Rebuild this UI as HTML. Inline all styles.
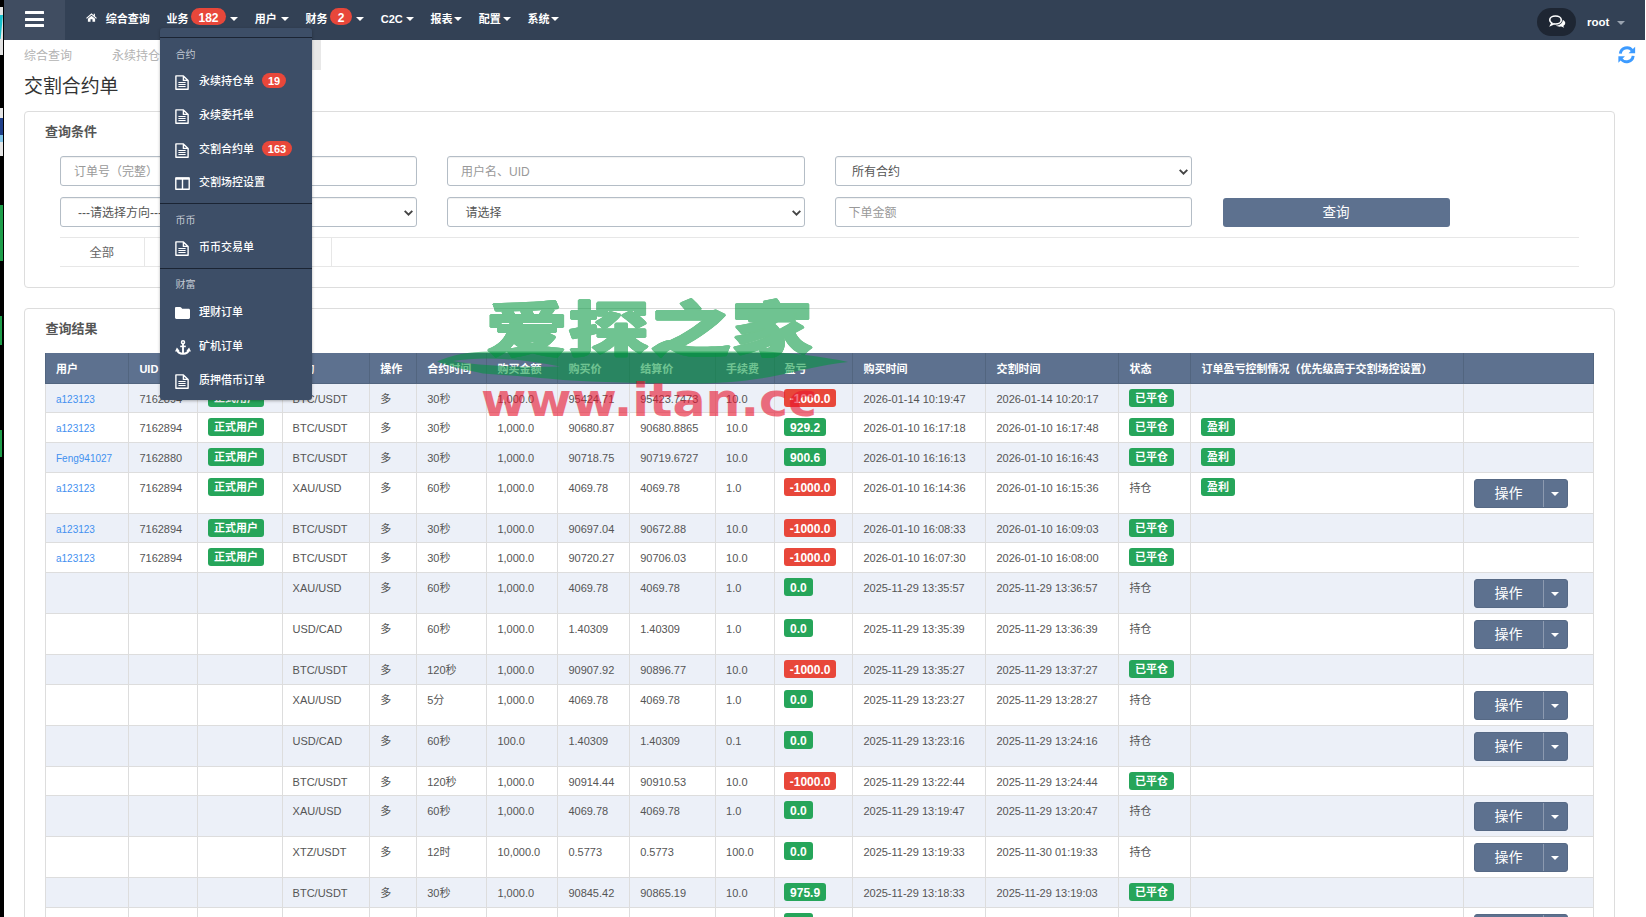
<!DOCTYPE html>
<html lang="zh-CN"><head><meta charset="utf-8"><title>交割合约单</title>
<style>
*{box-sizing:border-box;margin:0;padding:0}
html,body{width:1646px;height:917px;overflow:hidden;background:#fff}
body{position:relative;font-family:"Liberation Sans", "Noto Sans CJK SC", sans-serif;font-size:11px;color:#555;-webkit-font-smoothing:antialiased}
.a{position:absolute;white-space:nowrap}
svg{position:absolute;overflow:visible}
#strip{left:0;top:0;width:4px;height:917px;background:#000}
#nav{left:4px;top:0;width:1641px;height:40px;background:#334155}
#burger{left:0;top:0;width:61px;height:40px;background:#404d61}
.bar{left:21px;width:19px;height:3px;background:#fff;border-radius:.5px}
.ni{color:#fff;font-weight:700;font-size:11px;line-height:16px;top:10.5px}
.caret{width:0;height:0;border-left:4px solid transparent;border-right:4px solid transparent;border-top:4px solid #fff;top:17px}
.nb{background:#e8473a;color:#fff;font-weight:700;font-size:12px;line-height:17px;height:17px;top:8px;border-radius:9px;text-align:center;padding-top:2.3px;overflow:hidden}
.tab{top:48.2px;font-size:12px;line-height:16px;color:#b3b3b3}
#title{left:24px;top:73px;font-size:18.9px;line-height:28px;color:#333}
.panel{border:1px solid #ddd;border-radius:4px;background:#fff}
.ph{font-size:13px;font-weight:700;color:#555;line-height:18px}
.inp{height:30px;border:1px solid #b4bdc6;border-radius:3px;background:#fff;font-size:12px;line-height:28px;padding-top:1px;overflow:hidden;color:#999;box-shadow:inset 0 1px 1px rgba(0,0,0,.06)}
.inp.sel{color:#555}
.hl{height:1px;background:#e7e7e7}
.vl{width:1px;background:#e7e7e7}
.btn{background:#5d718f;color:#fff;border-radius:3px;text-align:center}
#thead{background:#5d718f;color:#fff;font-weight:700}
.row{left:45px;width:1549px;border-bottom:1px solid #ddd;border-right:1px solid #ddd}
.row.o{background:#ecf0f8}
.c{position:absolute;top:0;bottom:0;border-left:1px solid #ddd;white-space:nowrap}
.c span.t{position:relative;display:block;margin-left:10px;top:7px;line-height:16px}
#thead .c{border-left:1px solid #52657f}
#thead .c span.t{top:7.5px}
.c span.lk{color:#4390f0;font-size:10px;top:8px}
.bd{position:absolute;left:9.5px;top:5px;height:17.5px;line-height:17.5px;padding-top:1.2px;overflow:hidden;border-radius:3px;color:#fff;font-weight:700;font-size:11px;text-align:center}
.g{background:#26a55a}
.r{background:#e8473a}
.ob{position:absolute;left:10px;top:5.5px;width:94px;height:29px;border-radius:3px;background:#5d718f;border:1px solid #566985}
.ob .m{position:absolute;left:0;top:0;width:66px;height:27px;line-height:27px;color:#fff;font-size:14px;text-align:center}
.ob .s{position:absolute;left:67.5px;top:0;width:1px;height:27px;background:#8c9ab0}
.ob .k{position:absolute;left:76px;top:12px;width:0;height:0;border-left:4px solid transparent;border-right:4px solid transparent;border-top:4px solid #fff}
#dd{left:160px;top:28px;width:152px;height:372px;background:#3d4e67;border-radius:3px;box-shadow:0 1px 3px rgba(0,0,0,.3)}
.dv{left:0;width:152px;height:1px;background:#1b2433}
.dh{left:15.5px;font-size:10px;line-height:14px;color:#c3cad4}
.di{left:39px;font-size:11px;line-height:16px;color:#fff;font-weight:500}
.db{background:#e8473a;color:#fff;font-size:11px;font-weight:700;height:15px;line-height:15px;padding-top:1.4px;overflow:hidden;border-radius:8px;text-align:center}
</style></head>
<body>
<div id="strip" class="a">
<div class="a" style="left:0px;top:7px;width:3.1px;height:47.6px;background:#e3e3e3"></div>
<div class="a" style="left:0px;top:108px;width:3.1px;height:47.6px;background:#e6e6e6"></div>
<div class="a" style="left:0px;top:118px;width:3px;height:17px;background:#1f3f8a"></div>
<div class="a" style="left:0px;top:135px;width:3px;height:7px;background:#7fc4e8"></div>
<div class="a" style="left:0px;top:205px;width:3px;height:56px;background:#1e9e4a"></div>
<div class="a" style="left:0px;top:316px;width:1.5px;height:29px;background:#1e9e4a"></div>
<div class="a" style="left:0px;top:430px;width:1.5px;height:27px;background:#1e9e4a"></div>
<div class="a" style="left:0;top:15px;width:3px;height:24px;background:#16bfcc;clip-path:polygon(0 0,100% 0,20% 100%,0 100%)"></div>
</div>
<div id="nav" class="a">
<div id="burger" class="a"><div class="a bar" style="top:11px"></div><div class="a bar" style="top:17.5px"></div><div class="a bar" style="top:24px"></div></div>
<svg style="left:81.8px;top:13.3px" width="11" height="8.8" viewBox="0 0 22 18"><path fill="#fff" d="M11 0.5 L0 10 L1.6 11.8 L11 3.8 L20.4 11.8 L22 10 L18 6.5 V1.5 H15.5 V4.4 Z"/><path fill="#fff" d="M11 5.6 L3.6 11.9 V18 H9 V12.8 H13 V18 H18.4 V11.9 Z"/></svg>
<div class="a ni" style="left:101.7px">综合查询</div>
<div class="a ni" style="left:162.4px">业务</div>
<div class="a nb" style="left:187px;width:35px">182</div>
<div class="a caret" style="left:226px"></div>
<div class="a ni" style="left:250.8px">用户</div>
<div class="a caret" style="left:277.2px"></div>
<div class="a ni" style="left:301.5px">财务</div>
<div class="a nb" style="left:326px;width:22px">2</div>
<div class="a caret" style="left:352.2px"></div>
<div class="a ni" style="left:376.8px">C2C</div>
<div class="a caret" style="left:401.8px"></div>
<div class="a ni" style="left:426.4px">报表</div>
<div class="a caret" style="left:450px"></div>
<div class="a ni" style="left:474.7px">配置</div>
<div class="a caret" style="left:498.6px"></div>
<div class="a ni" style="left:523.5px">系统</div>
<div class="a caret" style="left:547.2px"></div>
<div class="a" style="left:1533px;top:8px;width:39px;height:28px;border-radius:14px;background:#1e2633"></div>
<svg style="left:1544.5px;top:15px" width="17" height="13" viewBox="0 0 34 26"><path fill="none" stroke="#fff" stroke-width="3.2" d="M13 2 C6.5 2 1.5 5.6 1.5 10 C1.5 12.6 3.2 14.8 5.8 16.2 L3.8 20.2 L9.8 17.6 C10.8 17.8 11.9 18 13 18 C19.5 18 24.5 14.4 24.5 10 C24.5 5.6 19.5 2 13 2 Z"/><path fill="#fff" d="M27.5 9.5 C30.5 11 32.5 13.3 32.5 16 C32.5 18.4 31 20.5 28.6 21.9 L30.4 25.6 L24.6 23.2 C23.6 23.4 22.6 23.5 21.5 23.5 C18.4 23.5 15.6 22.6 13.6 21.2 C20.4 20.8 27.6 17.2 27.5 9.5 Z"/></svg>
<div class="a ni" style="left:1583px;font-size:11.5px;top:13px;line-height:18px">root</div>
<div class="a caret" style="left:1613px;top:21px;border-top-color:#9aa3b0"></div>
</div>
<div class="a" style="left:192px;top:40px;width:128.5px;height:30px;background:#e8e8e8"></div>
<div class="a tab" style="left:24px">综合查询</div>
<div class="a tab" style="left:112px">永续持仓单</div>
<div class="a tab" style="left:212px;color:#666">交割合约单</div>
<svg style="left:1618px;top:46px" width="17.5" height="17.5" viewBox="0 0 24 24"><g fill="none" stroke="#3d9bff" stroke-width="4"><path d="M3.2 10.5 A9 9 0 0 1 19.5 6.2"/><path d="M20.8 13.5 A9 9 0 0 1 4.5 17.8"/></g><path fill="#3d9bff" d="M23.5 1 V10 H14.5 Z"/><path fill="#3d9bff" d="M0.5 23 V14 H9.5 Z"/></svg>
<div id="title" class="a">交割合约单</div>
<div class="a panel" style="left:24px;top:111px;width:1591px;height:177px"></div>
<div class="a ph" style="left:45px;top:123px">查询条件</div>
<div class="a inp" style="left:60px;top:156px;width:357px;padding-left:13px">订单号（完整）</div>
<div class="a inp" style="left:447px;top:156px;width:358px;padding-left:13px">用户名、UID</div>
<div class="a inp sel" style="left:835px;top:156px;width:357px;padding-left:16px">所有合约</div>
<svg style="left:1178.5px;top:168.5px" width="9" height="6" viewBox="0 0 9 6"><path fill="none" stroke="#444" stroke-width="1.9" d="M0.7 0.8 L4.5 4.6 L8.3 0.8"/></svg>
<div class="a inp sel" style="left:60px;top:197px;width:357px;padding-left:17px">---请选择方向---</div>
<svg style="left:403.5px;top:209.5px" width="9" height="6" viewBox="0 0 9 6"><path fill="none" stroke="#444" stroke-width="1.9" d="M0.7 0.8 L4.5 4.6 L8.3 0.8"/></svg>
<div class="a inp sel" style="left:447px;top:197px;width:358px;padding-left:17.5px">请选择</div>
<svg style="left:791.5px;top:209.5px" width="9" height="6" viewBox="0 0 9 6"><path fill="none" stroke="#444" stroke-width="1.9" d="M0.7 0.8 L4.5 4.6 L8.3 0.8"/></svg>
<div class="a inp" style="left:835px;top:197px;width:357px;padding-left:12.5px">下单金额</div>
<div class="a btn" style="left:1222.5px;top:197.5px;width:227px;height:29px;line-height:30.5px;font-size:13.5px;overflow:hidden">查询</div>
<div class="a hl" style="left:60px;top:237px;width:1519px"></div>
<div class="a hl" style="left:60px;top:266px;width:1519px"></div>
<div class="a vl" style="left:144px;top:238px;height:28px"></div>
<div class="a vl" style="left:331px;top:238px;height:28px"></div>
<div class="a" style="left:89.5px;top:245px;font-size:12.3px;line-height:17px;color:#666">全部</div>
<div class="a panel" style="left:24px;top:308px;width:1591px;height:640px"></div>
<div class="a ph" style="left:45.5px;top:320px">查询结果</div>
<div id="thead" class="a row" style="top:353px;height:31px;border-bottom:1px solid #52657f;border-right:1px solid #52657f">
<div class="c" style="left:0.0px;width:83.4px"><span class="t">用户</span></div>
<div class="c" style="left:83.4px;width:69.0px"><span class="t">UID</span></div>
<div class="c" style="left:152.4px;width:84.2px"><span class="t">用户类型</span></div>
<div class="c" style="left:236.6px;width:87.7px"><span class="t">合约</span></div>
<div class="c" style="left:324.3px;width:46.9px"><span class="t">操作</span></div>
<div class="c" style="left:371.2px;width:70.2px"><span class="t">合约时间</span></div>
<div class="c" style="left:441.4px;width:71.0px"><span class="t">购买金额</span></div>
<div class="c" style="left:512.4px;width:71.8px"><span class="t">购买价</span></div>
<div class="c" style="left:584.2px;width:85.9px"><span class="t">结算价</span></div>
<div class="c" style="left:670.1px;width:58.5px"><span class="t">手续费</span></div>
<div class="c" style="left:728.6px;width:78.8px"><span class="t">盈亏</span></div>
<div class="c" style="left:807.4px;width:133.0px"><span class="t">购买时间</span></div>
<div class="c" style="left:940.4px;width:133.0px"><span class="t">交割时间</span></div>
<div class="c" style="left:1073.4px;width:72.0px"><span class="t">状态</span></div>
<div class="c" style="left:1145.4px;width:273.0px"><span class="t">订单盈亏控制情况（优先级高于交割场控设置）</span></div>
<div class="c" style="left:1418.4px;width:130.6px"></div>
</div>
<div class="a row o" style="top:384px;height:29.0px">
<div class="c" style="left:0.0px;width:83.4px"><span class="t lk">a123123</span></div>
<div class="c" style="left:83.4px;width:69.0px"><span class="t ">7162894</span></div>
<div class="c" style="left:152.4px;width:84.2px"><span class="bd g" style="width:56px">正式用户</span></div>
<div class="c" style="left:236.6px;width:87.7px"><span class="t ">BTC/USDT</span></div>
<div class="c" style="left:324.3px;width:46.9px"><span class="t ">多</span></div>
<div class="c" style="left:371.2px;width:70.2px"><span class="t ">30秒</span></div>
<div class="c" style="left:441.4px;width:71.0px"><span class="t ">1,000.0</span></div>
<div class="c" style="left:512.4px;width:71.8px"><span class="t ">95424.71</span></div>
<div class="c" style="left:584.2px;width:85.9px"><span class="t ">95423.7473</span></div>
<div class="c" style="left:670.1px;width:58.5px"><span class="t ">10.0</span></div>
<div class="c" style="left:728.6px;width:78.8px"><span class="bd r" style="width:52px;font-size:12px;padding-top:2px">-1000.0</span></div>
<div class="c" style="left:807.4px;width:133.0px"><span class="t ">2026-01-14 10:19:47</span></div>
<div class="c" style="left:940.4px;width:133.0px"><span class="t ">2026-01-14 10:20:17</span></div>
<div class="c" style="left:1073.4px;width:72.0px"><span class="bd g" style="width:45px">已平仓</span></div>
<div class="c" style="left:1145.4px;width:273.0px"></div>
<div class="c" style="left:1418.4px;width:130.6px"></div>
</div>
<div class="a row" style="top:413px;height:30.0px">
<div class="c" style="left:0.0px;width:83.4px"><span class="t lk">a123123</span></div>
<div class="c" style="left:83.4px;width:69.0px"><span class="t ">7162894</span></div>
<div class="c" style="left:152.4px;width:84.2px"><span class="bd g" style="width:56px">正式用户</span></div>
<div class="c" style="left:236.6px;width:87.7px"><span class="t ">BTC/USDT</span></div>
<div class="c" style="left:324.3px;width:46.9px"><span class="t ">多</span></div>
<div class="c" style="left:371.2px;width:70.2px"><span class="t ">30秒</span></div>
<div class="c" style="left:441.4px;width:71.0px"><span class="t ">1,000.0</span></div>
<div class="c" style="left:512.4px;width:71.8px"><span class="t ">90680.87</span></div>
<div class="c" style="left:584.2px;width:85.9px"><span class="t ">90680.8865</span></div>
<div class="c" style="left:670.1px;width:58.5px"><span class="t ">10.0</span></div>
<div class="c" style="left:728.6px;width:78.8px"><span class="bd g" style="width:42px;font-size:12px;padding-top:2px">929.2</span></div>
<div class="c" style="left:807.4px;width:133.0px"><span class="t ">2026-01-10 16:17:18</span></div>
<div class="c" style="left:940.4px;width:133.0px"><span class="t ">2026-01-10 16:17:48</span></div>
<div class="c" style="left:1073.4px;width:72.0px"><span class="bd g" style="width:45px">已平仓</span></div>
<div class="c" style="left:1145.4px;width:273.0px"><span class="bd g" style="width:34px">盈利</span></div>
<div class="c" style="left:1418.4px;width:130.6px"></div>
</div>
<div class="a row o" style="top:443px;height:30.0px">
<div class="c" style="left:0.0px;width:83.4px"><span class="t lk">Feng941027</span></div>
<div class="c" style="left:83.4px;width:69.0px"><span class="t ">7162880</span></div>
<div class="c" style="left:152.4px;width:84.2px"><span class="bd g" style="width:56px">正式用户</span></div>
<div class="c" style="left:236.6px;width:87.7px"><span class="t ">BTC/USDT</span></div>
<div class="c" style="left:324.3px;width:46.9px"><span class="t ">多</span></div>
<div class="c" style="left:371.2px;width:70.2px"><span class="t ">30秒</span></div>
<div class="c" style="left:441.4px;width:71.0px"><span class="t ">1,000.0</span></div>
<div class="c" style="left:512.4px;width:71.8px"><span class="t ">90718.75</span></div>
<div class="c" style="left:584.2px;width:85.9px"><span class="t ">90719.6727</span></div>
<div class="c" style="left:670.1px;width:58.5px"><span class="t ">10.0</span></div>
<div class="c" style="left:728.6px;width:78.8px"><span class="bd g" style="width:42px;font-size:12px;padding-top:2px">900.6</span></div>
<div class="c" style="left:807.4px;width:133.0px"><span class="t ">2026-01-10 16:16:13</span></div>
<div class="c" style="left:940.4px;width:133.0px"><span class="t ">2026-01-10 16:16:43</span></div>
<div class="c" style="left:1073.4px;width:72.0px"><span class="bd g" style="width:45px">已平仓</span></div>
<div class="c" style="left:1145.4px;width:273.0px"><span class="bd g" style="width:34px">盈利</span></div>
<div class="c" style="left:1418.4px;width:130.6px"></div>
</div>
<div class="a row" style="top:473px;height:41.0px">
<div class="c" style="left:0.0px;width:83.4px"><span class="t lk">a123123</span></div>
<div class="c" style="left:83.4px;width:69.0px"><span class="t ">7162894</span></div>
<div class="c" style="left:152.4px;width:84.2px"><span class="bd g" style="width:56px">正式用户</span></div>
<div class="c" style="left:236.6px;width:87.7px"><span class="t ">XAU/USD</span></div>
<div class="c" style="left:324.3px;width:46.9px"><span class="t ">多</span></div>
<div class="c" style="left:371.2px;width:70.2px"><span class="t ">60秒</span></div>
<div class="c" style="left:441.4px;width:71.0px"><span class="t ">1,000.0</span></div>
<div class="c" style="left:512.4px;width:71.8px"><span class="t ">4069.78</span></div>
<div class="c" style="left:584.2px;width:85.9px"><span class="t ">4069.78</span></div>
<div class="c" style="left:670.1px;width:58.5px"><span class="t ">1.0</span></div>
<div class="c" style="left:728.6px;width:78.8px"><span class="bd r" style="width:52px;font-size:12px;padding-top:2px">-1000.0</span></div>
<div class="c" style="left:807.4px;width:133.0px"><span class="t ">2026-01-10 16:14:36</span></div>
<div class="c" style="left:940.4px;width:133.0px"><span class="t ">2026-01-10 16:15:36</span></div>
<div class="c" style="left:1073.4px;width:72.0px"><span class="t ">持仓</span></div>
<div class="c" style="left:1145.4px;width:273.0px"><span class="bd g" style="width:34px">盈利</span></div>
<div class="c" style="left:1418.4px;width:130.6px"><div class="ob"><div class="m">操作</div><div class="s"></div><div class="k"></div></div></div>
</div>
<div class="a row o" style="top:514px;height:29.0px">
<div class="c" style="left:0.0px;width:83.4px"><span class="t lk">a123123</span></div>
<div class="c" style="left:83.4px;width:69.0px"><span class="t ">7162894</span></div>
<div class="c" style="left:152.4px;width:84.2px"><span class="bd g" style="width:56px">正式用户</span></div>
<div class="c" style="left:236.6px;width:87.7px"><span class="t ">BTC/USDT</span></div>
<div class="c" style="left:324.3px;width:46.9px"><span class="t ">多</span></div>
<div class="c" style="left:371.2px;width:70.2px"><span class="t ">30秒</span></div>
<div class="c" style="left:441.4px;width:71.0px"><span class="t ">1,000.0</span></div>
<div class="c" style="left:512.4px;width:71.8px"><span class="t ">90697.04</span></div>
<div class="c" style="left:584.2px;width:85.9px"><span class="t ">90672.88</span></div>
<div class="c" style="left:670.1px;width:58.5px"><span class="t ">10.0</span></div>
<div class="c" style="left:728.6px;width:78.8px"><span class="bd r" style="width:52px;font-size:12px;padding-top:2px">-1000.0</span></div>
<div class="c" style="left:807.4px;width:133.0px"><span class="t ">2026-01-10 16:08:33</span></div>
<div class="c" style="left:940.4px;width:133.0px"><span class="t ">2026-01-10 16:09:03</span></div>
<div class="c" style="left:1073.4px;width:72.0px"><span class="bd g" style="width:45px">已平仓</span></div>
<div class="c" style="left:1145.4px;width:273.0px"></div>
<div class="c" style="left:1418.4px;width:130.6px"></div>
</div>
<div class="a row" style="top:543px;height:30.0px">
<div class="c" style="left:0.0px;width:83.4px"><span class="t lk">a123123</span></div>
<div class="c" style="left:83.4px;width:69.0px"><span class="t ">7162894</span></div>
<div class="c" style="left:152.4px;width:84.2px"><span class="bd g" style="width:56px">正式用户</span></div>
<div class="c" style="left:236.6px;width:87.7px"><span class="t ">BTC/USDT</span></div>
<div class="c" style="left:324.3px;width:46.9px"><span class="t ">多</span></div>
<div class="c" style="left:371.2px;width:70.2px"><span class="t ">30秒</span></div>
<div class="c" style="left:441.4px;width:71.0px"><span class="t ">1,000.0</span></div>
<div class="c" style="left:512.4px;width:71.8px"><span class="t ">90720.27</span></div>
<div class="c" style="left:584.2px;width:85.9px"><span class="t ">90706.03</span></div>
<div class="c" style="left:670.1px;width:58.5px"><span class="t ">10.0</span></div>
<div class="c" style="left:728.6px;width:78.8px"><span class="bd r" style="width:52px;font-size:12px;padding-top:2px">-1000.0</span></div>
<div class="c" style="left:807.4px;width:133.0px"><span class="t ">2026-01-10 16:07:30</span></div>
<div class="c" style="left:940.4px;width:133.0px"><span class="t ">2026-01-10 16:08:00</span></div>
<div class="c" style="left:1073.4px;width:72.0px"><span class="bd g" style="width:45px">已平仓</span></div>
<div class="c" style="left:1145.4px;width:273.0px"></div>
<div class="c" style="left:1418.4px;width:130.6px"></div>
</div>
<div class="a row o" style="top:573px;height:41.0px">
<div class="c" style="left:0.0px;width:83.4px"></div>
<div class="c" style="left:83.4px;width:69.0px"></div>
<div class="c" style="left:152.4px;width:84.2px"></div>
<div class="c" style="left:236.6px;width:87.7px"><span class="t ">XAU/USD</span></div>
<div class="c" style="left:324.3px;width:46.9px"><span class="t ">多</span></div>
<div class="c" style="left:371.2px;width:70.2px"><span class="t ">60秒</span></div>
<div class="c" style="left:441.4px;width:71.0px"><span class="t ">1,000.0</span></div>
<div class="c" style="left:512.4px;width:71.8px"><span class="t ">4069.78</span></div>
<div class="c" style="left:584.2px;width:85.9px"><span class="t ">4069.78</span></div>
<div class="c" style="left:670.1px;width:58.5px"><span class="t ">1.0</span></div>
<div class="c" style="left:728.6px;width:78.8px"><span class="bd g" style="width:28.7px;font-size:12px;padding-top:2px">0.0</span></div>
<div class="c" style="left:807.4px;width:133.0px"><span class="t ">2025-11-29 13:35:57</span></div>
<div class="c" style="left:940.4px;width:133.0px"><span class="t ">2025-11-29 13:36:57</span></div>
<div class="c" style="left:1073.4px;width:72.0px"><span class="t ">持仓</span></div>
<div class="c" style="left:1145.4px;width:273.0px"></div>
<div class="c" style="left:1418.4px;width:130.6px"><div class="ob"><div class="m">操作</div><div class="s"></div><div class="k"></div></div></div>
</div>
<div class="a row" style="top:614px;height:41.0px">
<div class="c" style="left:0.0px;width:83.4px"></div>
<div class="c" style="left:83.4px;width:69.0px"></div>
<div class="c" style="left:152.4px;width:84.2px"></div>
<div class="c" style="left:236.6px;width:87.7px"><span class="t ">USD/CAD</span></div>
<div class="c" style="left:324.3px;width:46.9px"><span class="t ">多</span></div>
<div class="c" style="left:371.2px;width:70.2px"><span class="t ">60秒</span></div>
<div class="c" style="left:441.4px;width:71.0px"><span class="t ">1,000.0</span></div>
<div class="c" style="left:512.4px;width:71.8px"><span class="t ">1.40309</span></div>
<div class="c" style="left:584.2px;width:85.9px"><span class="t ">1.40309</span></div>
<div class="c" style="left:670.1px;width:58.5px"><span class="t ">1.0</span></div>
<div class="c" style="left:728.6px;width:78.8px"><span class="bd g" style="width:28.7px;font-size:12px;padding-top:2px">0.0</span></div>
<div class="c" style="left:807.4px;width:133.0px"><span class="t ">2025-11-29 13:35:39</span></div>
<div class="c" style="left:940.4px;width:133.0px"><span class="t ">2025-11-29 13:36:39</span></div>
<div class="c" style="left:1073.4px;width:72.0px"><span class="t ">持仓</span></div>
<div class="c" style="left:1145.4px;width:273.0px"></div>
<div class="c" style="left:1418.4px;width:130.6px"><div class="ob"><div class="m">操作</div><div class="s"></div><div class="k"></div></div></div>
</div>
<div class="a row o" style="top:655px;height:30.0px">
<div class="c" style="left:0.0px;width:83.4px"></div>
<div class="c" style="left:83.4px;width:69.0px"></div>
<div class="c" style="left:152.4px;width:84.2px"></div>
<div class="c" style="left:236.6px;width:87.7px"><span class="t ">BTC/USDT</span></div>
<div class="c" style="left:324.3px;width:46.9px"><span class="t ">多</span></div>
<div class="c" style="left:371.2px;width:70.2px"><span class="t ">120秒</span></div>
<div class="c" style="left:441.4px;width:71.0px"><span class="t ">1,000.0</span></div>
<div class="c" style="left:512.4px;width:71.8px"><span class="t ">90907.92</span></div>
<div class="c" style="left:584.2px;width:85.9px"><span class="t ">90896.77</span></div>
<div class="c" style="left:670.1px;width:58.5px"><span class="t ">10.0</span></div>
<div class="c" style="left:728.6px;width:78.8px"><span class="bd r" style="width:52px;font-size:12px;padding-top:2px">-1000.0</span></div>
<div class="c" style="left:807.4px;width:133.0px"><span class="t ">2025-11-29 13:35:27</span></div>
<div class="c" style="left:940.4px;width:133.0px"><span class="t ">2025-11-29 13:37:27</span></div>
<div class="c" style="left:1073.4px;width:72.0px"><span class="bd g" style="width:45px">已平仓</span></div>
<div class="c" style="left:1145.4px;width:273.0px"></div>
<div class="c" style="left:1418.4px;width:130.6px"></div>
</div>
<div class="a row" style="top:685px;height:41.0px">
<div class="c" style="left:0.0px;width:83.4px"></div>
<div class="c" style="left:83.4px;width:69.0px"></div>
<div class="c" style="left:152.4px;width:84.2px"></div>
<div class="c" style="left:236.6px;width:87.7px"><span class="t ">XAU/USD</span></div>
<div class="c" style="left:324.3px;width:46.9px"><span class="t ">多</span></div>
<div class="c" style="left:371.2px;width:70.2px"><span class="t ">5分</span></div>
<div class="c" style="left:441.4px;width:71.0px"><span class="t ">1,000.0</span></div>
<div class="c" style="left:512.4px;width:71.8px"><span class="t ">4069.78</span></div>
<div class="c" style="left:584.2px;width:85.9px"><span class="t ">4069.78</span></div>
<div class="c" style="left:670.1px;width:58.5px"><span class="t ">1.0</span></div>
<div class="c" style="left:728.6px;width:78.8px"><span class="bd g" style="width:28.7px;font-size:12px;padding-top:2px">0.0</span></div>
<div class="c" style="left:807.4px;width:133.0px"><span class="t ">2025-11-29 13:23:27</span></div>
<div class="c" style="left:940.4px;width:133.0px"><span class="t ">2025-11-29 13:28:27</span></div>
<div class="c" style="left:1073.4px;width:72.0px"><span class="t ">持仓</span></div>
<div class="c" style="left:1145.4px;width:273.0px"></div>
<div class="c" style="left:1418.4px;width:130.6px"><div class="ob"><div class="m">操作</div><div class="s"></div><div class="k"></div></div></div>
</div>
<div class="a row o" style="top:726px;height:41.0px">
<div class="c" style="left:0.0px;width:83.4px"></div>
<div class="c" style="left:83.4px;width:69.0px"></div>
<div class="c" style="left:152.4px;width:84.2px"></div>
<div class="c" style="left:236.6px;width:87.7px"><span class="t ">USD/CAD</span></div>
<div class="c" style="left:324.3px;width:46.9px"><span class="t ">多</span></div>
<div class="c" style="left:371.2px;width:70.2px"><span class="t ">60秒</span></div>
<div class="c" style="left:441.4px;width:71.0px"><span class="t ">100.0</span></div>
<div class="c" style="left:512.4px;width:71.8px"><span class="t ">1.40309</span></div>
<div class="c" style="left:584.2px;width:85.9px"><span class="t ">1.40309</span></div>
<div class="c" style="left:670.1px;width:58.5px"><span class="t ">0.1</span></div>
<div class="c" style="left:728.6px;width:78.8px"><span class="bd g" style="width:28.7px;font-size:12px;padding-top:2px">0.0</span></div>
<div class="c" style="left:807.4px;width:133.0px"><span class="t ">2025-11-29 13:23:16</span></div>
<div class="c" style="left:940.4px;width:133.0px"><span class="t ">2025-11-29 13:24:16</span></div>
<div class="c" style="left:1073.4px;width:72.0px"><span class="t ">持仓</span></div>
<div class="c" style="left:1145.4px;width:273.0px"></div>
<div class="c" style="left:1418.4px;width:130.6px"><div class="ob"><div class="m">操作</div><div class="s"></div><div class="k"></div></div></div>
</div>
<div class="a row" style="top:767px;height:29.0px">
<div class="c" style="left:0.0px;width:83.4px"></div>
<div class="c" style="left:83.4px;width:69.0px"></div>
<div class="c" style="left:152.4px;width:84.2px"></div>
<div class="c" style="left:236.6px;width:87.7px"><span class="t ">BTC/USDT</span></div>
<div class="c" style="left:324.3px;width:46.9px"><span class="t ">多</span></div>
<div class="c" style="left:371.2px;width:70.2px"><span class="t ">120秒</span></div>
<div class="c" style="left:441.4px;width:71.0px"><span class="t ">1,000.0</span></div>
<div class="c" style="left:512.4px;width:71.8px"><span class="t ">90914.44</span></div>
<div class="c" style="left:584.2px;width:85.9px"><span class="t ">90910.53</span></div>
<div class="c" style="left:670.1px;width:58.5px"><span class="t ">10.0</span></div>
<div class="c" style="left:728.6px;width:78.8px"><span class="bd r" style="width:52px;font-size:12px;padding-top:2px">-1000.0</span></div>
<div class="c" style="left:807.4px;width:133.0px"><span class="t ">2025-11-29 13:22:44</span></div>
<div class="c" style="left:940.4px;width:133.0px"><span class="t ">2025-11-29 13:24:44</span></div>
<div class="c" style="left:1073.4px;width:72.0px"><span class="bd g" style="width:45px">已平仓</span></div>
<div class="c" style="left:1145.4px;width:273.0px"></div>
<div class="c" style="left:1418.4px;width:130.6px"></div>
</div>
<div class="a row o" style="top:796px;height:41.0px">
<div class="c" style="left:0.0px;width:83.4px"></div>
<div class="c" style="left:83.4px;width:69.0px"></div>
<div class="c" style="left:152.4px;width:84.2px"></div>
<div class="c" style="left:236.6px;width:87.7px"><span class="t ">XAU/USD</span></div>
<div class="c" style="left:324.3px;width:46.9px"><span class="t ">多</span></div>
<div class="c" style="left:371.2px;width:70.2px"><span class="t ">60秒</span></div>
<div class="c" style="left:441.4px;width:71.0px"><span class="t ">1,000.0</span></div>
<div class="c" style="left:512.4px;width:71.8px"><span class="t ">4069.78</span></div>
<div class="c" style="left:584.2px;width:85.9px"><span class="t ">4069.78</span></div>
<div class="c" style="left:670.1px;width:58.5px"><span class="t ">1.0</span></div>
<div class="c" style="left:728.6px;width:78.8px"><span class="bd g" style="width:28.7px;font-size:12px;padding-top:2px">0.0</span></div>
<div class="c" style="left:807.4px;width:133.0px"><span class="t ">2025-11-29 13:19:47</span></div>
<div class="c" style="left:940.4px;width:133.0px"><span class="t ">2025-11-29 13:20:47</span></div>
<div class="c" style="left:1073.4px;width:72.0px"><span class="t ">持仓</span></div>
<div class="c" style="left:1145.4px;width:273.0px"></div>
<div class="c" style="left:1418.4px;width:130.6px"><div class="ob"><div class="m">操作</div><div class="s"></div><div class="k"></div></div></div>
</div>
<div class="a row" style="top:837px;height:41.0px">
<div class="c" style="left:0.0px;width:83.4px"></div>
<div class="c" style="left:83.4px;width:69.0px"></div>
<div class="c" style="left:152.4px;width:84.2px"></div>
<div class="c" style="left:236.6px;width:87.7px"><span class="t ">XTZ/USDT</span></div>
<div class="c" style="left:324.3px;width:46.9px"><span class="t ">多</span></div>
<div class="c" style="left:371.2px;width:70.2px"><span class="t ">12时</span></div>
<div class="c" style="left:441.4px;width:71.0px"><span class="t ">10,000.0</span></div>
<div class="c" style="left:512.4px;width:71.8px"><span class="t ">0.5773</span></div>
<div class="c" style="left:584.2px;width:85.9px"><span class="t ">0.5773</span></div>
<div class="c" style="left:670.1px;width:58.5px"><span class="t ">100.0</span></div>
<div class="c" style="left:728.6px;width:78.8px"><span class="bd g" style="width:28.7px;font-size:12px;padding-top:2px">0.0</span></div>
<div class="c" style="left:807.4px;width:133.0px"><span class="t ">2025-11-29 13:19:33</span></div>
<div class="c" style="left:940.4px;width:133.0px"><span class="t ">2025-11-30 01:19:33</span></div>
<div class="c" style="left:1073.4px;width:72.0px"><span class="t ">持仓</span></div>
<div class="c" style="left:1145.4px;width:273.0px"></div>
<div class="c" style="left:1418.4px;width:130.6px"><div class="ob"><div class="m">操作</div><div class="s"></div><div class="k"></div></div></div>
</div>
<div class="a row o" style="top:878px;height:30.0px">
<div class="c" style="left:0.0px;width:83.4px"></div>
<div class="c" style="left:83.4px;width:69.0px"></div>
<div class="c" style="left:152.4px;width:84.2px"></div>
<div class="c" style="left:236.6px;width:87.7px"><span class="t ">BTC/USDT</span></div>
<div class="c" style="left:324.3px;width:46.9px"><span class="t ">多</span></div>
<div class="c" style="left:371.2px;width:70.2px"><span class="t ">30秒</span></div>
<div class="c" style="left:441.4px;width:71.0px"><span class="t ">1,000.0</span></div>
<div class="c" style="left:512.4px;width:71.8px"><span class="t ">90845.42</span></div>
<div class="c" style="left:584.2px;width:85.9px"><span class="t ">90865.19</span></div>
<div class="c" style="left:670.1px;width:58.5px"><span class="t ">10.0</span></div>
<div class="c" style="left:728.6px;width:78.8px"><span class="bd g" style="width:42px;font-size:12px;padding-top:2px">975.9</span></div>
<div class="c" style="left:807.4px;width:133.0px"><span class="t ">2025-11-29 13:18:33</span></div>
<div class="c" style="left:940.4px;width:133.0px"><span class="t ">2025-11-29 13:19:03</span></div>
<div class="c" style="left:1073.4px;width:72.0px"><span class="bd g" style="width:45px">已平仓</span></div>
<div class="c" style="left:1145.4px;width:273.0px"></div>
<div class="c" style="left:1418.4px;width:130.6px"></div>
</div>
<div class="a row" style="top:908px;height:41.0px">
<div class="c" style="left:0.0px;width:83.4px"></div>
<div class="c" style="left:83.4px;width:69.0px"></div>
<div class="c" style="left:152.4px;width:84.2px"></div>
<div class="c" style="left:236.6px;width:87.7px"><span class="t ">XAU/USD</span></div>
<div class="c" style="left:324.3px;width:46.9px"><span class="t ">多</span></div>
<div class="c" style="left:371.2px;width:70.2px"><span class="t ">60秒</span></div>
<div class="c" style="left:441.4px;width:71.0px"><span class="t ">1,000.0</span></div>
<div class="c" style="left:512.4px;width:71.8px"><span class="t ">4069.78</span></div>
<div class="c" style="left:584.2px;width:85.9px"><span class="t ">4069.78</span></div>
<div class="c" style="left:670.1px;width:58.5px"><span class="t ">1.0</span></div>
<div class="c" style="left:728.6px;width:78.8px"><span class="bd g" style="width:28.7px;font-size:12px;padding-top:2px">0.0</span></div>
<div class="c" style="left:807.4px;width:133.0px"><span class="t ">2025-11-29 13:18:04</span></div>
<div class="c" style="left:940.4px;width:133.0px"><span class="t ">2025-11-29 13:19:04</span></div>
<div class="c" style="left:1073.4px;width:72.0px"><span class="t ">持仓</span></div>
<div class="c" style="left:1145.4px;width:273.0px"></div>
<div class="c" style="left:1418.4px;width:130.6px"><div class="ob"><div class="m">操作</div><div class="s"></div><div class="k"></div></div></div>
</div>
<div class="a" style="left:485.5px;top:296px;font-size:59px;line-height:70px;font-weight:900;opacity:.56;color:#00963c;text-shadow:0.80px 0.00px 0 #00963c,0.69px 0.40px 0 #00963c,0.40px 0.69px 0 #00963c,0.00px 0.80px 0 #00963c,-0.40px 0.69px 0 #00963c,-0.69px 0.40px 0 #00963c,-0.80px 0.00px 0 #00963c,-0.69px -0.40px 0 #00963c,-0.40px -0.69px 0 #00963c,-0.00px -0.80px 0 #00963c,0.40px -0.69px 0 #00963c,0.69px -0.40px 0 #00963c;transform:scaleX(1.385);transform-origin:0 0">爱探之家</div>
<svg style="left:436px;top:345px" width="420" height="45" viewBox="436 345 420 45"><path fill="rgba(0,150,60,.56)" fill-rule="evenodd" d="M437 361.5 C452 355 468 351.5 490 351.5 L760 351.5 C790 352.5 825 357 848 362 C820 365 800 371 777 375.5 C750 381 720 383.5 690 383.5 C640 383.5 600 382 563 380 C530 377 505 375 483 373.4 C465 370 450 366.5 437 361.5 Z M453 361 C480 356.5 520 358 560 366.5 C520 367.5 480 366 453 361 Z"/></svg>
<div class="a" style="left:481px;top:371.5px;font-size:46px;line-height:56px;font-weight:700;font-family:DejaVu Sans,sans-serif;opacity:.6;color:#e8142d;transform:scaleX(1.065);transform-origin:0 0">www.itan.cc</div>
<div id="dd" class="a">
<div class="a dv" style="top:9px"></div>
<div class="a dh" style="top:19.5px">合约</div>
<svg style="left:15px;top:47px" width="14" height="15" viewBox="0 0 14 15"><path fill="none" stroke="#fff" stroke-width="1.4" stroke-linejoin="round" d="M0.9 0.9 H8.4 L13.1 5.4 V14.3 H0.9 Z M8.4 0.9 V5.4 H13.1"/><path stroke="#fff" stroke-width="1" d="M3.4 7.5 H10.6 M3.4 9.5 H10.6 M3.4 11.5 H10.6"/></svg>
<div class="a di" style="top:44.9px">永续持仓单</div>
<div class="a db" style="left:102px;top:44.800000000000004px;width:24px">19</div>
<svg style="left:15px;top:81px" width="14" height="15" viewBox="0 0 14 15"><path fill="none" stroke="#fff" stroke-width="1.4" stroke-linejoin="round" d="M0.9 0.9 H8.4 L13.1 5.4 V14.3 H0.9 Z M8.4 0.9 V5.4 H13.1"/><path stroke="#fff" stroke-width="1" d="M3.4 7.5 H10.6 M3.4 9.5 H10.6 M3.4 11.5 H10.6"/></svg>
<div class="a di" style="top:78.6px">永续委托单</div>
<svg style="left:15px;top:115px" width="14" height="15" viewBox="0 0 14 15"><path fill="none" stroke="#fff" stroke-width="1.4" stroke-linejoin="round" d="M0.9 0.9 H8.4 L13.1 5.4 V14.3 H0.9 Z M8.4 0.9 V5.4 H13.1"/><path stroke="#fff" stroke-width="1" d="M3.4 7.5 H10.6 M3.4 9.5 H10.6 M3.4 11.5 H10.6"/></svg>
<div class="a di" style="top:113.1px">交割合约单</div>
<div class="a db" style="left:102px;top:112.79999999999998px;width:30px">163</div>
<svg style="left:15px;top:149px" width="15" height="13" viewBox="0 0 15 13"><path fill="none" stroke="#fff" stroke-width="1.4" stroke-linejoin="round" d="M0.8 1 H14.2 V12.2 H0.8 Z M7.5 1.6 V12.2"/><path stroke="#fff" stroke-width="2.2" d="M0.8 1.6 H14.2"/></svg>
<div class="a di" style="top:146.0px">交割场控设置</div>
<div class="a dv" style="top:175px"></div>
<div class="a dh" style="top:185.5px">币币</div>
<svg style="left:15px;top:213px" width="14" height="15" viewBox="0 0 14 15"><path fill="none" stroke="#fff" stroke-width="1.4" stroke-linejoin="round" d="M0.9 0.9 H8.4 L13.1 5.4 V14.3 H0.9 Z M8.4 0.9 V5.4 H13.1"/><path stroke="#fff" stroke-width="1" d="M3.4 7.5 H10.6 M3.4 9.5 H10.6 M3.4 11.5 H10.6"/></svg>
<div class="a di" style="top:210.6px">币币交易单</div>
<div class="a dv" style="top:240px"></div>
<div class="a dh" style="top:250.39999999999998px">财富</div>
<svg style="left:15px;top:279px" width="15" height="12" viewBox="0 0 15 12"><path fill="#fff" d="M1.2 0 H5 C5.6 0 6 .3 6.4 .8 L7.2 1.8 H13.6 C14.4 1.8 15 2.4 15 3.2 V10.6 C15 11.4 14.4 12 13.6 12 H1.4 C.6 12 0 11.4 0 10.6 V1.2 C0 .5 .5 0 1.2 0 Z"/></svg>
<div class="a di" style="top:275.7px">理财订单</div>
<svg style="left:15px;top:312px" width="16" height="15" viewBox="0 0 16 15"><g fill="none" stroke="#fff"><circle cx="8" cy="2.3" r="1.5" stroke-width="1.5"/><path stroke-width="1.9" d="M8 3.8 V13.4"/><path stroke-width="1.6" d="M5.2 6.4 H10.8"/><path stroke-width="2" d="M2 9.8 C2.6 12.4 5 13.7 8 13.7 C11 13.7 13.4 12.4 14 9.8"/></g><path fill="#fff" d="M0 11.6 L1.9 7.6 L4.6 11 Z M16 11.6 L14.1 7.6 L11.4 11 Z"/></svg>
<div class="a di" style="top:309.6px">矿机订单</div>
<svg style="left:15px;top:346px" width="14" height="15" viewBox="0 0 14 15"><path fill="none" stroke="#fff" stroke-width="1.4" stroke-linejoin="round" d="M0.9 0.9 H8.4 L13.1 5.4 V14.3 H0.9 Z M8.4 0.9 V5.4 H13.1"/><path stroke="#fff" stroke-width="1" d="M3.4 7.5 H10.6 M3.4 9.5 H10.6 M3.4 11.5 H10.6"/></svg>
<div class="a di" style="top:343.6px">质押借币订单</div>
</div>
</body></html>
